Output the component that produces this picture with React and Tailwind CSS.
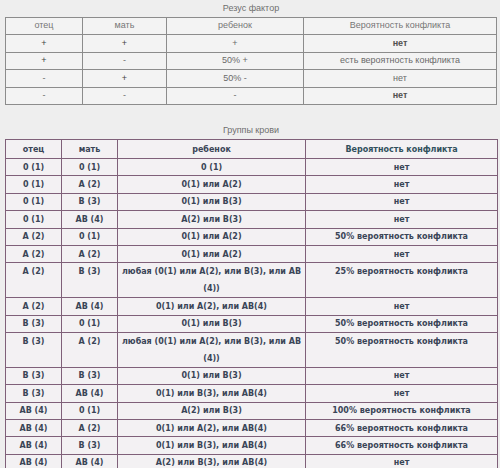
import React from "react";

const rh = [
  ["+", "+", "+", "нет", true],
  ["+", "-", "50% +", "есть вероятность конфликта", false],
  ["-", "+", "50% -", "нет", false],
  ["-", "-", "-", "нет", true],
];

const bg = [
  ["0 (1)", "0 (1)", "0 (1)", "нет"],
  ["0 (1)", "A (2)", "0(1) или A(2)", "нет"],
  ["0 (1)", "B (3)", "0(1) или B(3)", "нет"],
  ["0 (1)", "AB (4)", "A(2) или B(3)", "нет"],
  ["A (2)", "0 (1)", "0(1) или A(2)", "50% вероятность конфликта"],
  ["A (2)", "A (2)", "0(1) или A(2)", "нет"],
  ["A (2)", "B (3)", "любая (0(1) или A(2), или B(3), или AB|(4))", "25% вероятность конфликта"],
  ["A (2)", "AB (4)", "0(1) или A(2), или AB(4)", "нет"],
  ["B (3)", "0 (1)", "0(1) или B(3)", "50% вероятность конфликта"],
  ["B (3)", "A (2)", "любая (0(1) или A(2), или B(3), или AB|(4))", "50% вероятность конфликта"],
  ["B (3)", "B (3)", "0(1) или B(3)", "нет"],
  ["B (3)", "AB (4)", "0(1) или B(3), или AB(4)", "нет"],
  ["AB (4)", "0 (1)", "A(2) или B(3)", "100% вероятность конфликта"],
  ["AB (4)", "A (2)", "0(1) или A(2), или AB(4)", "66% вероятность конфликта"],
  ["AB (4)", "B (3)", "0(1) или B(3), или AB(4)", "66% вероятность конфликта"],
  ["AB (4)", "AB (4)", "A(2) или B(3), или AB(4)", "нет"],
];

function Cell1({ children, last, bold, head, dark }) {
  return (
    <div
      className={`flex items-center justify-center border-b border-[#8c8c8c] ${last ? "" : "border-r"} ${
        bold ? "font-bold text-[#505050]" : head ? "text-[#767676]" : dark ? "text-[#444444]" : "text-[#6a6a6a]"
      }`}
    >
      {children}
    </div>
  );
}

function Cell2({ children, last, tall, teal }) {
  const parts = String(children).split("|");
  return (
    <div
      className={`border-b border-[#7f6079] text-center leading-[17px] ${last ? "" : "border-r"} ${
        teal ? "text-[#31505c]" : "text-[#3a4557]"
      } ${tall ? "" : "flex items-center justify-center"}`}
    >
      {tall ? (
        <div>
          {parts.map((p, i) => (
            <div key={i}>{p}</div>
          ))}
        </div>
      ) : (
        parts[0]
      )}
    </div>
  );
}

export default function App() {
  return (
    <div className="w-[500px] h-[468px] overflow-hidden bg-[#eeeeee] pl-[5px] pr-[3px]">
      <div className="h-[17px] flex items-center justify-center text-[9px] text-[#6e6e6e] font-['Liberation_Sans',Arial,sans-serif]">
        Резус фактор
      </div>
      <div className="w-[492px] border-l border-t border-r border-[#8c8c8c] bg-[#f3f3f3] font-['Liberation_Sans',Arial,sans-serif] text-[9px] grid grid-cols-[77px_84px_137px_1fr] grid-rows-[17px_17.5px_17.5px_17.5px_17.5px]">
        <Cell1 head>отец</Cell1>
        <Cell1 head>мать</Cell1>
        <Cell1 head>ребенок</Cell1>
        <Cell1 head last>Вероятность конфликта</Cell1>
        {rh.map((r, i) => (
          <React.Fragment key={i}>
            <Cell1 dark={r[0] === "+"}>{r[0]}</Cell1>
            <Cell1 dark={r[1] === "+"}>{r[1]}</Cell1>
            <Cell1>{r[2]}</Cell1>
            <Cell1 last bold={r[4]}>
              {r[3]}
            </Cell1>
          </React.Fragment>
        ))}
      </div>
      <div className="h-[17px]" />
      <div className="h-[17px] flex items-center justify-center text-[9px] text-[#6e6e6e] font-['Liberation_Sans',Arial,sans-serif]">
        Группы крови
      </div>
      <div
        className="w-[493px] border-l border-t border-r border-[#7f6079] bg-[#f3f1f3] font-['DejaVu_Sans',Verdana,sans-serif] font-bold text-[8px] grid grid-cols-[56px_56px_188px_1fr]"
        style={{
          gridTemplateRows: ["19px"]
            .concat(bg.map((r) => (r[2].includes("|") ? "34.8px" : "17.4px")))
            .join(" "),
        }}
      >
        <Cell2>отец</Cell2>
        <Cell2>мать</Cell2>
        <Cell2>ребенок</Cell2>
        <Cell2 last teal>
          Вероятность конфликта
        </Cell2>
        {bg.map((r, i) => {
          const tall = r[2].includes("|");
          return (
            <React.Fragment key={i}>
              <Cell2 tall={tall}>{r[0]}</Cell2>
              <Cell2 tall={tall}>{r[1]}</Cell2>
              <Cell2 tall={tall}>{r[2]}</Cell2>
              <Cell2 tall={tall} last>
                {r[3]}
              </Cell2>
            </React.Fragment>
          );
        })}
      </div>
    </div>
  );
}
